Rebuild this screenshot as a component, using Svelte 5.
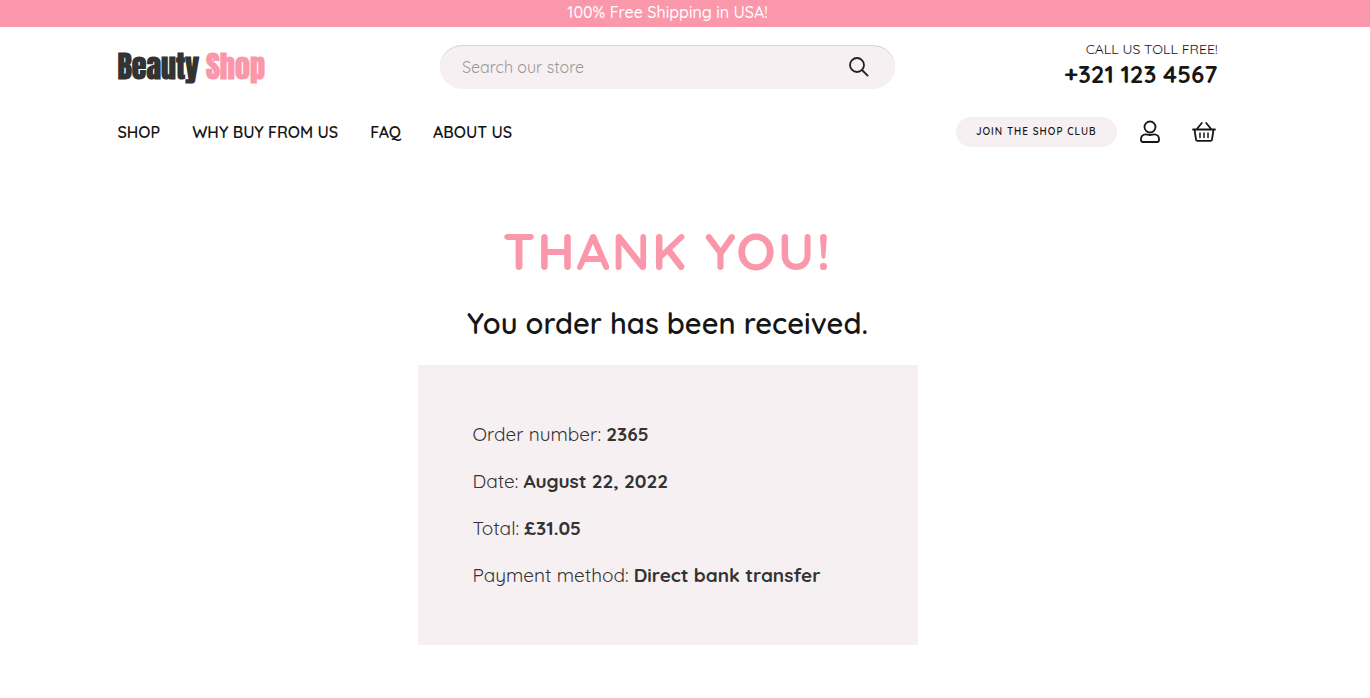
<script lang="ts">
  let query = $state('');

  const links = ['Shop', 'Why buy from us', 'FAQ', 'About us'];

  const order = [
    { label: 'Order number', value: '2365' },
    { label: 'Date', value: 'August 22, 2022' },
    { label: 'Total', value: '£31.05' },
    { label: 'Payment method', value: 'Direct bank transfer' },
  ];
</script>

<div class="promo">100% Free Shipping in USA!</div>

<div class="page">
  <header>
    <div class="top">
      <a class="logo" href="#home">Beauty <span>Shop</span></a>

      <form class="search" role="search" onsubmit={(e) => e.preventDefault()}>
        <input type="search" aria-label="Search our store" placeholder="Search our store" bind:value={query} />
        <button type="submit" aria-label="Search">
          <svg width="20" height="20" viewBox="0 0 20 20">
            <circle cx="8" cy="8" r="7" />
            <path d="M13 13L18.6 18.6" />
          </svg>
        </button>
      </form>

      <div class="phone">
        <span>Call us toll free!</span>
        <a href="tel:+3211234567">+321 123 4567</a>
      </div>
    </div>

    <div class="bottom">
      <nav>
        {#each links as link}
          <a href="#{link}">{link}</a>
        {/each}
      </nav>

      <div class="actions">
        <a class="club" href="#club">Join the shop club</a>
        <a class="icon" href="#account" aria-label="Account">
          <svg width="20" height="24" viewBox="0 0 20 24">
            <circle cx="10" cy="7" r="5.5" />
            <path d="M5.6 14.3C3 14.3 1 16.4 1 19V20C1 21.3 1.9 22 3 22H17C18.1 22 19 21.3 19 20V19C19 16.4 17 14.3 14.4 14.3C13 14.3 12 15 10 15S7 14.3 5.6 14.3Z" />
          </svg>
        </a>
        <a class="icon" href="#cart" aria-label="Basket">
          <svg width="26" height="22" viewBox="0 0 26 22">
            <path d="M2 8.5H24M3.5 8.5L5 18.6Q5.2 19.8 6.4 19.8H19.6Q20.8 19.8 21 18.6L22.5 8.5M5.5 8.5L10.8 2M20.5 8.5L15.2 2" />
            <path class="thin" d="M9 12V16.4M13 12V16.4M17 12V16.4" />
          </svg>
        </a>
      </div>
    </div>
  </header>

  <main>
    <h1>Thank you!</h1>
    <h2>You order has been received.</h2>
    <ul class="order">
      {#each order as row}
        <li>{row.label}: <strong>{row.value}</strong></li>
      {/each}
    </ul>
  </main>
</div>

<style>
  :global(body) {
    margin: 0;
    background: #fff;
    color: #161616;
    font-family: Quicksand, Lato, sans-serif;
    font-size: 16px;
  }

  a {
    color: inherit;
    text-decoration: none;
  }

  svg {
    display: block;
    fill: none;
    stroke: currentColor;
    stroke-width: 1.8;
    stroke-linecap: round;
    stroke-linejoin: round;
  }

  .thin {
    stroke-width: 1.5;
  }

  .promo {
    padding: 0 35px 2px 0;
    background: #fb97aa;
    color: #fff;
    font-weight: 500;
    line-height: 25px;
    text-align: center;
  }

  .page {
    max-width: 1100px;
    margin: 0 auto;
    padding: 0 52px 0 17px;
  }

  .top {
    display: grid;
    grid-template-columns: 1fr 455px 1fr;
    align-items: center;
    padding-top: 12px;
  }

  .logo {
    padding-top: 4px;
    color: #333;
    font-family: Impact, Anton, 'Liberation Sans', sans-serif;
    font-size: 30px;
    font-weight: 700;
    line-height: 40px;
  }

  .logo span {
    color: #fb97aa;
  }

  .search {
    display: flex;
    align-items: center;
    box-sizing: border-box;
    height: 44px;
    margin-top: 4px;
    padding: 0 26px 0 22px;
    border-radius: 22px;
    background: #f6f0f2;
    box-shadow: inset 0 1px 0 #ddd2d6;
  }

  .search input {
    flex: 1;
    min-width: 0;
    padding: 0;
    border: 0;
    outline: 0;
    background: none;
    color: #333;
    font: inherit;
  }

  .search input::placeholder {
    color: #9c9799;
  }

  .search button {
    padding: 0;
    border: 0;
    background: none;
    color: #222;
    cursor: pointer;
  }

  .phone {
    display: flex;
    flex-direction: column;
    align-items: flex-end;
    padding-bottom: 2px;
  }

  .phone span {
    font-size: 14px;
    line-height: 20px;
    text-transform: uppercase;
  }

  .phone a {
    font-size: 24px;
    font-weight: 700;
    line-height: 30px;
  }

  .bottom {
    display: flex;
    align-items: center;
    justify-content: space-between;
    padding-top: 26px;
  }

  nav {
    display: flex;
    gap: 32px;
  }

  nav a {
    font-weight: 600;
    text-transform: uppercase;
  }

  .actions {
    display: flex;
    align-items: center;
    padding-right: 1px;
  }

  .club {
    padding: 0 20px;
    border-radius: 15px;
    background: #f6f0f2;
    font-size: 10px;
    font-weight: 600;
    letter-spacing: 1px;
    line-height: 30px;
    text-transform: uppercase;
  }

  .icon {
    margin-left: 23px;
  }

  .icon + .icon {
    margin-left: 31px;
  }

  main {
    display: flex;
    flex-direction: column;
    align-items: center;
    padding: 73px 0 50px;
  }

  h1,
  h2 {
    margin: 0;
  }

  h1 {
    color: #fb97aa;
    font-size: 52px;
    font-weight: 700;
    letter-spacing: 2px;
    line-height: 62px;
    text-transform: uppercase;
  }

  h2 {
    padding: 22px 0 23px;
    font-size: 29px;
    font-weight: 600;
    line-height: 38px;
  }

  .order {
    box-sizing: border-box;
    width: 100%;
    max-width: 500px;
    margin: 0;
    padding: 46px 55px;
    background: #f6f0f2;
    color: #333;
    font-size: 19px;
    line-height: 47px;
    list-style: none;
  }
</style>
